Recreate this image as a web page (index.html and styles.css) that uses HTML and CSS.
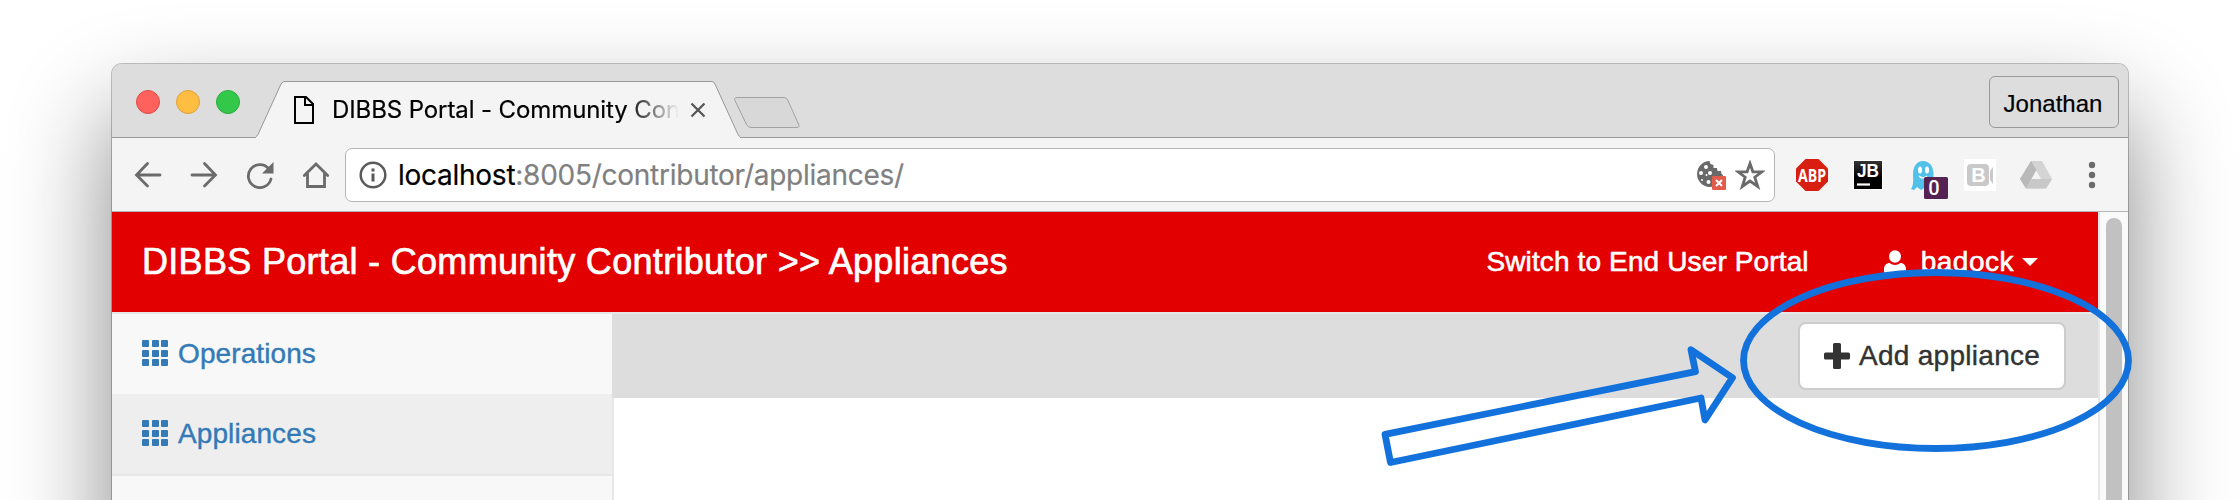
FILE: index.html
```
<!DOCTYPE html>
<html lang="en">
<head>
<meta charset="utf-8">
<title>DIBBS Portal - Community Contributor</title>
<link rel="stylesheet" href="styles.css">
</head>
<body>
<div class="window">
  <div class="tabstrip">
    <div class="lights"><i class="light red"></i><i class="light amber"></i><i class="light green"></i></div>
    <div class="tab">
      <svg class="tab-shape" width="484" height="58" viewBox="0 0 484 58"><path d="M0 58V57Q1 56.500 2 54.500L25 5Q27 1.500 30 1.500H454Q457 1.500 459 5L482 54.500Q483 56.500 484 57V58Z" fill="#f4f4f4"/><path d="M0 56.500Q1 56.500 2 54.500L25 4Q27 1.500 28 1.500H456Q458 1.500 459 4L482 54.500Q483 56.500 484 56.500" fill="none" stroke="#999"/></svg>
      <svg class="favicon" width="20" height="28" viewBox="0 0 20 28"><path d="M1 1H12L19 8V27H1ZM11 1V9H19" fill="none" stroke="#000" stroke-width="2"/></svg>
      <span class="tab-title">DIBBS Portal - Community Contributor</span>
      <svg class="close" width="16" height="16" viewBox="0 0 16 16"><path d="M1.500 1.500L14.500 14.500M14.500 1.500L1.500 14.500" stroke="#555" stroke-width="2.200"/></svg>
    </div>
    <svg class="newtab" width="68" height="32" viewBox="0 0 68 32"><path d="M4 1.500H51Q53.500 1.500 54.700 4L65.500 28Q67 31.500 64 31.500H18Q15 31.500 13.500 28.500L2 4.500Q.5 1.500 4 1.500Z" fill="#d8d8d8" stroke="#a2a2a2"/></svg>
    <div class="profile">Jonathan</div>
  </div>
  <div class="toolbar">
    <div class="nav">
      <svg width="28" height="28" viewBox="0 0 28 28"><path d="M26 14H3M13.500 2.500L2.500 14L13.500 25" /></svg>
      <svg width="28" height="28" viewBox="0 0 28 28"><path d="M2 14H25M14.500 2.500L25.500 14L14.500 25"/></svg>
      <svg width="28" height="28" viewBox="0 0 28 28"><path d="M22.500 7.500A11.500 11.500 0 1 0 25 18"/><path class="solid" d="M27.500 1V12.500H16Z"/></svg>
      <svg width="28" height="28" viewBox="0 0 28 28"><path d="M2.300 14.500L14 3L25.700 14.500M5.500 12.500V25.500H22.500V12.500"/></svg>
    </div>
    <div class="address">
      <svg width="28" height="28" viewBox="0 0 28 28"><circle cx="14" cy="14" r="12.300" fill="none" stroke="#5a5a5a" stroke-width="2.500"/><path d="M12.500 7.500h3v3h-3zM12.500 12.500h3v8h-3z" fill="#5a5a5a"/></svg>
      <span class="url"><b>localhost</b>:8005/contributor/appliances/</span>
      <svg class="cookie" width="30" height="30" viewBox="0 0 30 30"><path d="M13.500 1A13 13 0 1 0 27 15L25.500 14L25 11L21.500 11L21 8L17.500 8L17.500 5L14.500 4Z" fill="#696969"/><g fill="#fff"><circle cx="10" cy="7" r="2"/><circle cx="5" cy="13" r="2"/><circle cx="10.500" cy="15" r="1"/><circle cx="14" cy="13" r="2"/><circle cx="6" cy="20" r="1"/><circle cx="12.500" cy="22" r="2"/></g><rect x="16" y="16" width="14" height="14" rx="1" fill="#e35b4b"/><path d="M20 20L26 26M26 20L20 26" stroke="#fff" stroke-width="2"/></svg>
      <svg class="star" width="30" height="30" viewBox="0 0 30 30"><path d="M15 3.500L17.900 11.800H27L19.800 17.200L22.700 26.500L15 21L7.300 26.500L10.200 17.200L3 11.800H12.100Z" fill="none" stroke="#6a6a6a" stroke-width="2.800"/></svg>
    </div>
    <div class="extensions">
      <svg width="32" height="32" viewBox="0 0 32 32"><path d="M9.500 0H22.500L32 9.500V22.500L22.500 32H9.500L0 22.500V9.500Z" fill="#d81e10"/><text x="16" y="22.500" class="abp" textLength="28" lengthAdjust="spacingAndGlyphs">ABP</text></svg>
      <svg width="32" height="32" viewBox="0 0 32 32"><defs><linearGradient id="jb" x2="0" y2="1"><stop stop-color="#333"/><stop offset=".6" stop-color="#000"/></linearGradient></defs><path d="M1 1H31V31H1Z" fill="#fff"/><path d="M2 2H30V30H2Z" fill="url(#jb)"/><text x="5" y="18" class="jb" textLength="22" lengthAdjust="spacingAndGlyphs">JB</text><path d="M5 25.500H18" stroke="#fff" stroke-width="2.200"/></svg>
      <svg width="38" height="42" viewBox="0 0 38 42"><path d="M3 16C3 7 7 2 13 2S23.500 7 23.500 15V27L20 31L16 28L11 31L7 28L4 31L1 30C4 26 3 20 3 16Z" fill="#51c1ea"/><g fill="#fff"><ellipse cx="10" cy="11" rx="2" ry="3.500"/><ellipse cx="17" cy="11" rx="2" ry="3.500"/></g><path d="M9 17Q13 21 17 17" fill="none" stroke="#fff" stroke-width="1.500"/><rect x="14" y="18" width="24" height="22" rx="1.500" fill="#542353"/><text x="24" y="36" class="count">0</text></svg>
      <svg width="32" height="32" viewBox="0 0 32 32"><path d="M0 0H32V32H0Z" fill="#fff"/><rect x="3" y="5" width="22" height="22" rx="4" fill="#c9c9c9"/><path d="M26 12L29 8V25L26 21Z" fill="#c9c9c9"/><text x="14.500" y="22.500" class="bee">B</text></svg>
      <svg width="32" height="32" viewBox="0 0 32 32"><path d="M11 2H22L32 20L26 29.500H6L0 20Z" fill="#d4d4d4"/><path d="M11 2L16.500 11L6 29.500L0 20Z" fill="#b9b9b9"/><path d="M12 20H32L26 29.500H6Z" fill="#c8c8c8"/><path d="M16.200 11.500L21 20H11.500Z" fill="#f4f4f4"/></svg>
      <svg class="dots" width="8" height="28" viewBox="0 0 8 28"><g fill="#6b6b6b"><circle cx="4" cy="4" r="3.200"/><circle cx="4" cy="14" r="3.200"/><circle cx="4" cy="24" r="3.200"/></g></svg>
    </div>
  </div>
  <div class="viewport">
    <div class="page">
      <header class="navbar">
        <span class="brand">DIBBS Portal - Community Contributor &gt;&gt; Appliances</span>
        <a class="switch">Switch to End User Portal</a>
        <a class="user"><svg width="24" height="24" viewBox="0 0 24 24"><ellipse cx="12" cy="6.500" rx="6" ry="6.200"/><path d="M1 24V19C1 15 4 13 6.500 13Q12 17 17.500 13C20 13 23 15 23 19V24Z"/></svg><span>badock</span><i class="caret"></i></a>
      </header>
      <div class="body">
        <nav class="sidebar">
          <a class="item"><span class="grid"><i></i><i></i><i></i><i></i><i></i><i></i><i></i><i></i><i></i></span><span>Operations</span></a>
          <a class="item active"><span class="grid"><i></i><i></i><i></i><i></i><i></i><i></i><i></i><i></i><i></i></span><span>Appliances</span></a>
        </nav>
        <main>
          <div class="actions">
            <div class="button"><svg width="26" height="26" viewBox="0 0 26 26"><path d="M10.500 0h5q1.500 0 1.500 1.500V9.500h7.500q1.500 0 1.500 1.500v4q0 1.500-1.500 1.500H17v8q0 1.500-1.500 1.500h-5Q9 26 9 24.500v-8H1.500Q0 16.500 0 15v-4Q0 9.500 1.500 9.500H9V1.500Q9 0 10.500 0Z" fill="#333"/></svg><span>Add appliance</span></div>
          </div>
        </main>
      </div>
    </div>
    <div class="scrollbar"><div class="thumb"></div></div>
  </div>
</div>
<svg class="annotation" width="2240" height="500" viewBox="0 0 2240 500"><g fill="none" stroke="#1371dc" stroke-width="6.800" stroke-linejoin="round"><path d="M1385 434.300L1695.500 371.700L1691 349.700L1732.500 377.700L1705 420L1701 398L1390.500 462.500Z"/><ellipse cx="1936" cy="360.500" rx="192.500" ry="88"/></g></svg>
</body>
</html>
```
FILE: styles.css
```
* { box-sizing: border-box; }
html { height: 500px; overflow: hidden; }
body {
  margin: 0;
  width: 2240px;
  height: 500px;
  overflow: hidden;
  background: #fff;
  font-family: "Liberation Sans", Arial, sans-serif;
  padding: 64px 112px 0;
}
svg { display: block; flex: none; }
.window {
  width: 2016px;
  height: 900px;
  border-radius: 10px 10px 0 0;
  background: #fff;
  box-shadow: 0 0 0 1px rgba(0,0,0,.23), 0 50px 100px rgba(0,0,0,.48);
}
.tabstrip {
  height: 74px;
  display: flex;
  background: #ddd;
  border-radius: 10px 10px 0 0;
  border-bottom: 1px solid #999;
  padding: 12px 9px 0 24px;
}
.lights { display: flex; gap: 16px; padding-top: 14px; width: 120px; flex: none; }
.light { width: 24px; height: 24px; border-radius: 50%; border: 1px solid; }
.red { background: #ff615c; border-color: #e24b47; }
.amber { background: #ffbd42; border-color: #dfa03a; }
.green { background: #34c84a; border-color: #2bac3a; }
.tab {
  position: relative;
  width: 484px;
  height: 58px;
  margin-top: 5px;
  display: flex;
  align-items: flex-start;
  padding-left: 38px;
  flex: none;
}
.tab-shape { position: absolute; left: 0; top: -1px; }
.favicon { position: relative; margin-top: 15px; }
.tab-title {
  position: relative;
  margin: 14px 0 0 18px;
  width: 349px;
  overflow: hidden;
  white-space: nowrap;
  font: 24px/30px Inter, sans-serif;
  letter-spacing: -.1px;
  color: #000;
  -webkit-text-stroke: .2px;
  -webkit-mask-image: linear-gradient(90deg, #000 295px, transparent 347px);
  mask-image: linear-gradient(90deg, #000 295px, transparent 347px);
}
.close { position: relative; margin: 21px 0 0 9px; }
.newtab { margin: 20px 0 0 -7px; }
.profile {
  margin-left: auto;
  width: 130px;
  height: 52px;
  border: 1px solid #999;
  border-radius: 6px;
  padding-right: 2px;
  text-align: center;
  font-size: 24px;
  line-height: 54px;
  -webkit-text-stroke: .2px;
}
.toolbar {
  height: 74px;
  display: flex;
  align-items: center;
  background: #f4f4f4;
  border-bottom: 1px solid #b8b8b8;
  padding-left: 22px;
}
.nav { display: flex; gap: 28px; margin: 0 15px 0 0; }
.nav path { fill: none; stroke: #6b6b6b; stroke-width: 2.8; stroke-linecap: round; }
.nav .solid { fill: #6b6b6b; stroke: none; }
.address {
  width: 1430px;
  height: 54px;
  border: 1px solid #b5b5b5;
  border-radius: 7px;
  background: #fff;
  display: flex;
  align-items: center;
  padding: 0 9px 0 13px;
}
.url { margin-left: 11px; font: 28px/40px Inter, sans-serif; letter-spacing: -.26px; color: #808080; -webkit-text-stroke: .2px; }
.url b { font-weight: 400; color: #000; }
.cookie { margin-left: auto; }
.star { margin-left: 9px; }
.extensions { display: flex; align-items: center; }
.extensions svg { margin-left: 24px; }
.extensions svg:first-child { margin-left: 21px; }
.extensions svg:nth-child(3) { margin: 10px 0 0 26px; }
.extensions svg:nth-child(4) { margin-left: 16px; }
.extensions .dots { margin-left: 36px; }
.abp { font: bold 17px "Open Sans", sans-serif; fill: #fff; text-anchor: middle; }
.jb { font: bold 18px "Liberation Sans", sans-serif; fill: #fff; }
.count { font: 500 20px Roboto, sans-serif; fill: #fff; text-anchor: middle; }
.bee { font: bold 20px "Liberation Sans", sans-serif; fill: #fff; text-anchor: middle; }
.viewport { display: flex; height: 752px; -webkit-text-stroke: .4px; }
.page { width: 1986px; }
.navbar {
  height: 102px;
  background: #e20000;
  border-bottom: 2px solid #e7e7e7;
  display: flex;
  align-items: center;
  padding: 0 60px 0 30px;
  color: #fff;
  font-size: 28px;
  white-space: nowrap;
}
.brand { font-size: 36px; letter-spacing: .31px; -webkit-text-stroke: .7px; }
.switch { margin-left: auto; letter-spacing: .13px; -webkit-text-stroke: .6px; }
.user { display: flex; align-items: center; margin-left: 74px; -webkit-text-stroke: .6px; }
.user svg { fill: #fff; }
.user span { margin-left: 14px; letter-spacing: .5px; }
.caret { border: 8px solid transparent; border-top-color: #fff; border-bottom: 0; margin: 0 0 0 8px; }
.body { display: flex; height: 650px; }
.sidebar { width: 502px; border-right: 2px solid #e7e7e7; background: #f8f8f8; }
.item {
  height: 80px;
  display: flex;
  align-items: center;
  gap: 10px;
  padding-left: 30px;
  font-size: 28px;
  letter-spacing: .1px;
  color: #337ab7;
}
.item.active { height: 82px; background: #eee; border-bottom: 2px solid #e7e7e7; }
.grid { display: grid; grid-template-columns: repeat(3, 7px); grid-auto-rows: 7px; gap: 2.5px; margin-top: -2px; }
.grid i { background: #337ab7; border-radius: 1px; }
main { flex: 1; background: #fff; }
.actions { height: 84px; background: #ddd; margin-left: -2px; display: flex; justify-content: flex-end; align-items: center; padding-right: 32px; }
.button {
  width: 268px;
  height: 68px;
  border: 2px solid #ccc;
  border-radius: 8px;
  background: #fff;
  display: flex;
  align-items: center;
  gap: 9px;
  padding-left: 24px;
  font-size: 28px;
  letter-spacing: .28px;
  color: #333;
  white-space: nowrap;
}
.scrollbar { width: 30px; border-left: 2px solid #e7e7e7; background: #fafafa; padding: 6px 6px 0; }
.thumb { width: 16px; height: 740px; border-radius: 8px; background: #c1c1c1; }
.annotation { position: absolute; left: 0; top: 0; }
```
